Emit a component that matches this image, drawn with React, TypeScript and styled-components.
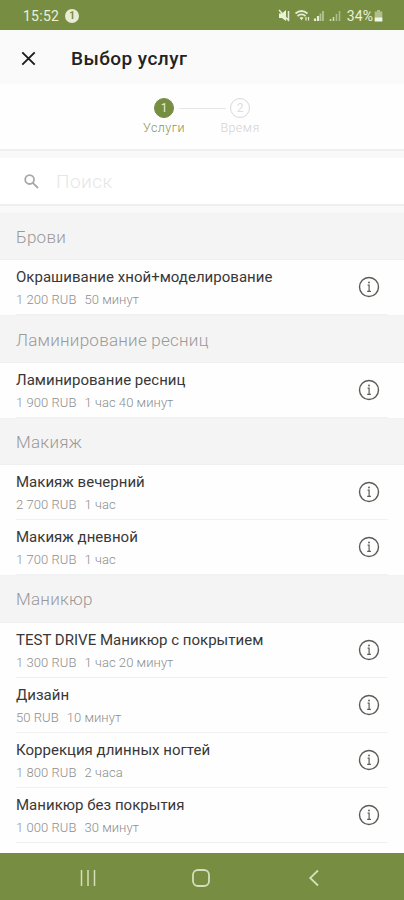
import React from "react";
import styled, { createGlobalStyle } from "styled-components";

const GREEN = "#778e42";

const GlobalStyle = createGlobalStyle`
  * { box-sizing: border-box; }
  body { margin: 0; background: #fff; font-family: Roboto, "Liberation Sans", sans-serif; }
`;

const Screen = styled.div`
  width: 404px;
  height: 900px;
  display: flex;
  flex-direction: column;
  overflow: hidden;
  background: #fefefe;
`;

const StatusBar = styled.div`
  height: 30px;
  flex: none;
  display: flex;
  align-items: center;
  justify-content: space-between;
  padding: 1px 21px 0 23px;
  background: ${GREEN};
  color: #eaf0da;
  font-size: 14px;
`;

const StatusGroup = styled.div`
  display: flex;
  align-items: center;
`;

const Clock = styled.span`
  letter-spacing: 0.25px;
  margin-right: 6px;
`;

const Notice = styled.span`
  width: 14px;
  height: 14px;
  border-radius: 50%;
  background: #e6edd4;
  color: ${GREEN};
  font-size: 10px;
  font-weight: 700;
  line-height: 14px;
  text-align: center;
`;

const Percent = styled.span`
  margin: 0 1px 0 5px;
  font-size: 14px;
  letter-spacing: 0.1px;
`;

const Header = styled.header`
  height: 54px;
  flex: none;
  display: flex;
  align-items: center;
  padding: 3px 0 0 21px;
  background: #fafafa;
`;

const Title = styled.h1`
  margin: 0 0 0 35px;
  font-size: 19px;
  line-height: 24px;
  font-weight: 500;
  letter-spacing: 0.45px;
  color: #222;
`;

const Stepper = styled.div`
  height: 65px;
  flex: none;
  display: flex;
  justify-content: center;
  align-items: flex-start;
  padding-top: 14px;
  background: #fefefe;
`;

const Step = styled.div<{ $active?: boolean }>`
  width: 42px;
  display: flex;
  flex-direction: column;
  align-items: center;
  font-size: 12.5px;
  line-height: 16px;
  font-weight: 300;
  letter-spacing: 0.45px;
  white-space: nowrap;
  color: ${(p) => (p.$active ? "#84954f" : "#d4d4d4")};
`;

const StepDot = styled.div<{ $active?: boolean }>`
  width: 20px;
  height: 20px;
  margin-bottom: 2px;
  border-radius: 50%;
  border: 1.5px solid ${(p) => (p.$active ? GREEN : "#d9d9d9")};
  background: ${(p) => (p.$active ? GREEN : "transparent")};
  color: ${(p) => (p.$active ? "#e6edd4" : "#dedede")};
  font-size: 12px;
  line-height: 18px;
  letter-spacing: 0;
  font-weight: 400;
  text-align: center;
`;

const StepLine = styled.div`
  width: 47px;
  height: 1px;
  margin: 10px -7px 0 -6px;
  background: #e6e6e6;
`;

const Gap = styled.div`
  height: 9px;
  flex: none;
  background: #f9f9f9;
  border-top: 2px solid #efefef;
`;

const Search = styled.div`
  height: 46px;
  flex: none;
  display: flex;
  align-items: center;
  padding-left: 24px;
  background: #fff;
`;

const Placeholder = styled.span`
  margin-left: 17px;
  font-size: 19px;
  font-weight: 300;
  letter-spacing: 0.5px;
  color: #e6e6e6;
`;

const SectionTitle = styled.h2`
  height: 47.4px;
  margin: 0;
  padding: 1px 16px 0;
  display: flex;
  align-items: center;
  background: #f4f4f4;
  border-top: 1px solid #f2f2f2;
  border-bottom: 1px solid #efefef;
  font-size: 17px;
  font-weight: 300;
  letter-spacing: 0.25px;
  color: #999;
`;

const Row = styled.div`
  height: 55px;
  margin-left: 16px;
  margin-right: 16px;
  padding-right: 8px;
  display: flex;
  align-items: center;
  justify-content: space-between;
  border-bottom: 1px solid #f1f1f1;
`;

const Name = styled.div`
  font-size: 15px;
  line-height: 20px;
  letter-spacing: 0.02px;
  color: #383838;
  margin-top: 1px;
`;

const Detail = styled.div`
  margin-top: 4px;
  display: flex;
  gap: 8px;
  font-size: 13px;
  line-height: 17px;
  font-weight: 300;
  letter-spacing: 0.05px;
  color: #8e8e8e;
`;

const Services = styled.main`
  flex: 1;
  min-height: 0;
  overflow: hidden;
`;

const NavBar = styled.nav`
  height: 47px;
  flex: none;
  display: grid;
  grid-template-columns: 20px 20px 20px;
  column-gap: 93px;
  align-items: center;
  padding: 3px 0 0 78px;
  background: ${GREEN};
`;

const InfoIcon = () => (
  <svg width="22" height="22" viewBox="0 0 22 22" fill="none" stroke="#5c5c56">
    <circle cx="11" cy="11" r="9.5" strokeWidth="1.4" />
    <path d="M9.6 9.2h1.5v6M9.2 15.3h3.7" strokeWidth="1.2" />
    <circle cx="11" cy="6.5" r="0.9" fill="#5c5c56" stroke="none" />
  </svg>
);

const StatusIcons = () => (
  <svg width="64" height="14" viewBox="0 0 64 14" fill="none" stroke="#e6edd4">
    <path d="M1 4.5h3l4-3.5v11L4 9H1z" fill="#edf2df" stroke="none" />
    <path d="M1 1l10 11M10.5 2v9" strokeWidth="1.5" />
    <path d="M17.5 4.5q6-5 12 0M19.5 7q4-3.2 8 0" strokeWidth="1.8" />
    <path d="M21.5 8.8q2-1.5 4 0l-2 2.4z" fill="#e6edd4" stroke="none" />
    <path d="M28 11.5V8M30.5 11.5V8" strokeWidth="1.2" />
    <path d="M37 12V9.5M40 12V7" strokeWidth="2.2" />
    <path d="M42.5 12V4.5M45 12V2" strokeWidth="1.8" opacity=".55" />
    <path d="M52.5 12v-2M55.5 12V8" strokeWidth="1.6" opacity=".8" />
    <path d="M58.5 12V5M61.5 12V2" strokeWidth="1.5" opacity=".5" />
  </svg>
);

const BatteryIcon = () => (
  <svg width="9" height="13" viewBox="0 0 9 13">
    <path d="M3 1h3v1.5h2.3V12H.7V2.5H3z" fill="#b0c08c" />
    <path d="M.7 8.5h7.6v4H.7z" fill="#f2f6e8" />
  </svg>
);

const SECTIONS = [
  { title: "Брови", items: [["Окрашивание хной+моделирование", "1 200 RUB", "50 минут"]] },
  { title: "Ламинирование ресниц", items: [["Ламинирование ресниц", "1 900 RUB", "1 час 40 минут"]] },
  {
    title: "Макияж",
    items: [
      ["Макияж вечерний", "2 700 RUB", "1 час"],
      ["Макияж дневной", "1 700 RUB", "1 час"],
    ],
  },
  {
    title: "Маникюр",
    items: [
      ["TEST DRIVE Маникюр с покрытием", "1 300 RUB", "1 час 20 минут"],
      ["Дизайн", "50 RUB", "10 минут"],
      ["Коррекция длинных ногтей", "1 800 RUB", "2 часа"],
      ["Маникюр без покрытия", "1 000 RUB", "30 минут"],
    ],
  },
];

export default function App() {
  return (
    <>
      <GlobalStyle />
      <Screen>
        <StatusBar>
          <StatusGroup>
            <Clock>15:52</Clock>
            <Notice>1</Notice>
          </StatusGroup>
          <StatusGroup>
            <StatusIcons />
            <Percent>34%</Percent>
            <BatteryIcon />
          </StatusGroup>
        </StatusBar>
        <Header>
          <svg width="15" height="15" viewBox="0 0 15 15" fill="none" stroke="#1c1c1c" strokeWidth="1.9">
            <path d="M1.3 1.3l12.4 12.4M13.7 1.3L1.3 13.7" />
          </svg>
          <Title>Выбор услуг</Title>
        </Header>
        <Stepper>
          <Step $active>
            <StepDot $active>1</StepDot>
            Услуги
          </Step>
          <StepLine />
          <Step>
            <StepDot>2</StepDot>
            Время
          </Step>
        </Stepper>
        <Gap />
        <Search>
          <svg width="15" height="15" viewBox="0 0 15 15" fill="none" stroke="#a8a8a8" strokeWidth="1.8">
            <circle cx="5.6" cy="5.6" r="4.4" />
            <path d="M8.8 8.8l5.2 5.2" />
          </svg>
          <Placeholder>Поиск</Placeholder>
        </Search>
        <Gap />
        <Services>
          {SECTIONS.map((section) => (
            <section key={section.title}>
              <SectionTitle>{section.title}</SectionTitle>
              {section.items.map(([name, price, time]) => (
                <Row key={name}>
                  <div>
                    <Name>{name}</Name>
                    <Detail>
                      <span>{price}</span>
                      <span>{time}</span>
                    </Detail>
                  </div>
                  <InfoIcon />
                </Row>
              ))}
            </section>
          ))}
        </Services>
        <NavBar>
          <svg width="20" height="20" viewBox="0 0 20 20" stroke="#d5dfbb" strokeWidth="1.5">
            <path d="M3.5 2v16M10 2v16M16.5 2v16" />
          </svg>
          <svg width="20" height="20" viewBox="0 0 20 20" fill="none" stroke="#d5dfbb" strokeWidth="1.8">
            <rect x="2" y="2" width="16" height="16" rx="5" />
          </svg>
          <svg width="20" height="20" viewBox="0 0 20 20" fill="none" stroke="#d5dfbb" strokeWidth="1.8">
            <path d="M14 2.5L6.2 10l7.8 7.5" />
          </svg>
        </NavBar>
      </Screen>
    </>
  );
}
